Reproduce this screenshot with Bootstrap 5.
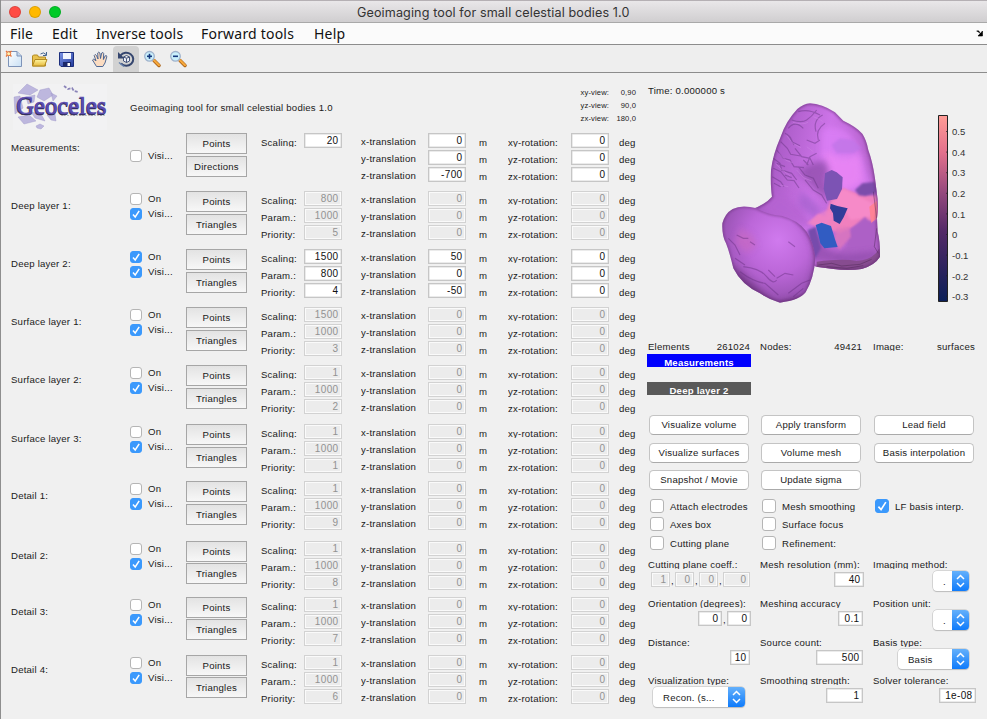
<!DOCTYPE html>
<html lang="en">
<head>
<meta charset="utf-8">
<meta name="viewport" content="width=device-width, initial-scale=1">
<title>Geoimaging tool for small celestial bodies 1.0</title>
<link href="https://cdn.jsdelivr.net/npm/bootstrap@5.3.0/dist/css/bootstrap.min.css" rel="stylesheet">
<style>
body{width:987px;height:719px;overflow:hidden;background:#f0f0f0;color:#1a1a1a;font:9.6px/14px "Liberation Sans",Arial,sans-serif;letter-spacing:.21px;border-left:1px solid #8e8e8e}
.titlebar{height:23px;flex:none;background:linear-gradient(#e9e7e9,#d0ced0);border-top:1px solid #b5b0b4;border-bottom:1px solid #a9a9a9;font:12.6px/23px Inter,Roboto,sans-serif;letter-spacing:.11px;color:#333}
.titlebar .lights{width:356px;padding-left:8px;gap:8px}
.light{width:12px;height:12px;border-radius:50%;border:1px solid #0002}
.light.close-dot{background:#ff4b44}.light.min-dot{background:#ffb900}.light.max-dot{background:#00ca28}
.menus{height:22px;flex:none;background:#fbfbfb;border-bottom:1px solid #8c8c8c;font:14px/21px "Noto Sans",sans-serif;letter-spacing:.2px;color:#111;padding:0 2px 0 9px}
.me1{width:42px}.me2{width:44px}.me3{width:105px}.me4{width:113px}
.tools{height:28px;flex:none;background:#eee;border-bottom:1px solid #8c8c8c}
.tools svg{display:block}
.left-pane{width:647px;flex:none}
.intro{height:60px}
.intro-text{padding-top:28px}
.views{font-size:7.6px;line-height:13px;padding-top:13px;letter-spacing:.12px}
.view-values{width:27px;margin-right:12px}
.groups{display:grid;grid-template-rows:58px 58px 58px 58px 59px 57px 60px 56px 58px 58px}
.grp{display:grid;grid-template-columns:119px 56px 61px 14px 43px 38px 19px 67px 38px 13px 29px 63px 38px 10px 28px;padding-left:10px;align-items:start}
.grp .name{padding-top:8px}
.ln{height:14px;margin-bottom:3px;overflow:hidden;white-space:nowrap}
.texts{padding-top:3px}
.texts .ln:first-child{height:11px;margin-bottom:6px}
.trans{padding-top:2px}
.units{padding-top:3px}
.num{display:block;height:15px;border:1px solid #c6c6c6;background:#fff;font-size:10px;letter-spacing:.35px;line-height:14px;text-align:right;padding-right:2.500px;color:#111;box-shadow:inset 0 0 0 .5px #d8d8d8}
.fields .num{margin-bottom:2px}
.num.off{background:#ececec;border-color:#d2d2d2;box-shadow:inset 0 0 0 1px #fafafa;color:#929292}
.flat{height:21px;border:1px solid #a6a6a6;background:linear-gradient(#e3e3e3,#f7f7f7);text-align:center;line-height:19px}
.flat+.flat{margin-top:2px}
.tight .flat+.flat{margin-top:1px}
.check{display:flex;align-items:center;gap:6px;height:15px}
.check span{padding-top:1px}
.box{width:12px;height:12px;flex:none;border:1px solid #b5b5b5;border-radius:3px;background:#fff;display:flex}
.box.on{background:#3b99fc;border-color:#3b99fc}
.box svg{width:100%;height:100%}
.right-pane{width:339px;flex:none;height:646px}
.time{height:24px;padding-top:11px}
.plot{display:block;width:339px;height:242px;letter-spacing:0}
.tri{display:grid;grid-template-columns:112px 113px 114px}
.stats{height:15px;align-items:start}
.stats>div{height:12px;width:102px;overflow:hidden;line-height:16px}
.strip{width:104px;height:13px;overflow:hidden;color:#fff;font-weight:700;text-align:center;line-height:18px;margin-left:-1px}
.strip.meas{background:#0000fe}
.strip.deep{background:#595959;margin-top:15px}
.pills{margin-top:20px;padding-left:1px;grid-template-rows:28px 27px 28px}
.pill{width:100px;height:20px;background:#fff;border:1px solid #c4c4c4;border-bottom-color:#aaa;border-radius:4.5px;text-align:center;line-height:18px}
.opts{padding-left:2px;grid-template-rows:18px 19px 19px}
.opts .check{height:16px}
.opts .box{width:14px;height:14px}
.params{grid-template-rows:39px 39px 38px 38px;margin-top:4px}
.params .cap{height:11px;overflow:hidden;line-height:14px;margin-bottom:3px}
.pick{height:20px;margin-top:-1px;background:#fff;border-radius:4px;box-shadow:0 0 0 .5px #bbb,0 1px 1px #0003;display:flex;line-height:22px}
.pick span{flex:1;padding-left:10px;overflow:hidden}
.pick svg{width:17px;height:20px;flex:none;border-radius:0 4px 4px 0;background:linear-gradient(#64b0fb,#0f7bfb)}
.end102{width:102px}.end103{width:103px}.end104{width:104px}.end96{width:96px}
.w19{width:19px}.w20{width:20px}.w24{width:24px}.w25{width:25px}.w27{width:27px}.w30{width:30px}.w36{width:36px}.w37{width:37px}.w47{width:47px}.w71{width:71px}.w92{width:92px}
.sep{width:5px;text-align:center;line-height:17px}
.in3{padding-left:3px}.in4{padding-left:5px}
</style>
</head>
<body class="d-flex flex-column">
<header class="titlebar d-flex">
  <div class="lights d-flex align-items-center">
    <i class="light close-dot"></i><i class="light min-dot"></i><i class="light max-dot"></i>
  </div>
  <div>Geoimaging tool for small celestial bodies 1.0</div>
</header>
<nav class="menus d-flex">
  <span class="me1">File</span><span class="me2">Edit</span><span class="me3">Inverse tools</span><span class="me4">Forward tools</span><span class="me5">Help</span>
  <svg class="ms-auto mt-1" width="10" height="14"><path d="M1.500 4q3-1 3 1.500l2 2M7.500 4v5H3z" fill="#000" stroke="#000" stroke-width=".6"/></svg>
</nav>
<div class="tools">
<svg width="200" height="27" viewBox="1 45 200 27">
  <defs>
    <linearGradient id="paper" x2="1" y2="1"><stop stop-color="#fff"/><stop offset="1" stop-color="#c9e0f5"/></linearGradient>
    <linearGradient id="gold" x2="0" y2="1"><stop stop-color="#fff6a0"/><stop offset="1" stop-color="#e6b93c"/></linearGradient>
    <linearGradient id="disk" x2="1" y2="1"><stop stop-color="#7d96e8"/><stop offset="1" stop-color="#223a9c"/></linearGradient>
  </defs>
  <path d="M8.500 51.500h8.500l4.500 4.500v10.500h-13z" fill="url(#paper)" stroke="#7d93b8"/><path d="M17 51.500v4.500h4.500" fill="#c4d6ec" stroke="#7d93b8"/>
  <path d="M6 51l5.500 5.500M11.500 51l-5.500 5.500" stroke="#e8743a" stroke-width="1.300"/><circle cx="8.700" cy="53.700" r="2" fill="#fff2b0" stroke="#e8743a"/>
  <path d="M32.500 66V56l1-1h4l1 2h7v9z" fill="#e9c24e" stroke="#b28a22"/><path d="M32.500 66l2.500-6.500h12L44.500 66z" fill="url(#gold)" stroke="#b28a22"/><path d="M40.500 54q3-2.500 5.500.5M46.500 52v3.500H43" fill="none" stroke="#43648f"/>
  <path d="M59.500 52.500h14v14H61l-1.500-1.500z" fill="url(#disk)" stroke="#1d2f7d"/><path d="M63 53h8v6h-8z" fill="#f1f5ff"/><path d="M63 62h8v4.500h-8z" fill="#1b2869"/><path d="M67.500 63h2.500v3h-2.500z" fill="#fff"/>
  <path d="M96.500 66.500l-4-6.500q1-2 3 .500l.500.500-1.800-5.500q.8-2 2.300 0l1.500 3.500-.3-6q1-1.800 2.200 0l.6 5.500 1.200-5.500q1.500-1.300 2 .500l-.3 6 1.800-3.700q1.700-.8 1.600 1l-1.800 6.200-2.200 3.500z" fill="#fbdcc1" stroke="#3c5a8c" stroke-width=".9"/>
  <path d="M113 50q0-4 4-4h18q4 0 4 4v22h-26z" fill="#d2d2d2"/>
  <path d="M120.500 55.500a7 6.500 0 1 1 .500 8" fill="none" stroke="#35466f" stroke-width="2"/><path d="M118 52v6.500h6.500z" fill="#35466f"/><path d="M119 62.500l5 4" stroke="#6682ad" stroke-width="1.500"/>
  <path d="M123.500 57l3-1.500 3 1.500v4l-3 1.500-3-1.500zM123.500 57l3 1.300 3-1.300M126.500 58.500v4" fill="#eef1f8" stroke="#35466f" stroke-width=".9"/>
  <g id="mag"><path d="M154 60.500l5 5" stroke="#a75d12" stroke-width="3.500" stroke-linecap="round"/><path d="M154 60.200l5 5" stroke="#f5a83c" stroke-width="2.200" stroke-linecap="round"/><circle cx="149.500" cy="56.300" r="4.800" fill="#c9effb" stroke="#9fb2cc" stroke-width="1.300"/><path d="M147 56.300h5" stroke="#14377d" stroke-width="1.600"/></g>
  <path d="M149.500 53.800v5" stroke="#14377d" stroke-width="1.600"/><use href="#mag" x="26"/>
</svg>
</div>
<main class="d-flex">
<section class="left-pane">
  <div class="intro d-flex">
    <svg width="129" height="60" viewBox="1 73 129 60" class="flex-shrink-0">
      <path d="M13 84h94v46H13z" fill="#f2f2f3"/>
      <g fill="#bdb7de" stroke="#9c95c8" stroke-width=".4">
        <path d="M18 93l9-9 11 6-8 5zM40 90l9-2 4 7-9 6-7-4zM14 97l6-1 3 12-8 6zM18 117l11-2 7 6-12 3zM31 112l10 2 4 7-10-3zM47 115l8-1 1 7-5-1zM51 93l6 3-4 5zM36 126l4-2 4 2-3 3-4-1zM26 97l9-2-1 7-6 2z"/>
      </g>
      <path d="M64 86l4 3 4-1 2 3 4 1" fill="none" stroke="#8a83b8" stroke-width="1.800" stroke-dasharray="3 1.500"/>
      <path d="M61 115.500h45" stroke="#c4c4c4" stroke-dasharray="2 1"/>
      <g font-family="Liberation Serif,serif" font-size="25" letter-spacing="0"><text x="16" y="114.500" textLength="90" lengthAdjust="spacingAndGlyphs" fill="#29264d" stroke="#29264d" stroke-width=".6">Geoceles</text><text x="16.600" y="113.900" textLength="90" lengthAdjust="spacingAndGlyphs" fill="#5b4cae" stroke="#5b4cae" stroke-width=".5">Geoceles</text></g>
    </svg>
    <div class="intro-text">Geoimaging tool for small celestial bodies 1.0</div>
    <div class="views ms-auto text-end">xy-view:<br>yz-view:<br>zx-view:</div>
    <div class="views view-values text-end">0,90<br>90,0<br>180,0</div>
  </div>
  <div class="groups" id="groups"></div>
</section>
<section class="right-pane">
  <div class="time">Time: 0.000000 s</div>
  <svg class="plot" viewBox="648 97 339 242" font-size="9.500">
    <defs>
      <linearGradient id="cbar" x2="0" y2="1"><stop stop-color="#ff9c96"/><stop offset=".2" stop-color="#e2708c"/><stop offset=".42" stop-color="#93487d"/><stop offset=".62" stop-color="#542a68"/><stop offset=".85" stop-color="#27225c"/><stop offset="1" stop-color="#0b1f58"/></linearGradient>
      <linearGradient id="big" x1="0" x2="1" y2=".3"><stop stop-color="#8a48a8"/><stop offset=".25" stop-color="#a95bc6"/><stop offset=".6" stop-color="#cd74e8"/><stop offset="1" stop-color="#b060c6"/></linearGradient>
      <radialGradient id="lobe" cx=".6" cy=".35" r=".75"><stop stop-color="#d07aee"/><stop offset=".45" stop-color="#bc67d9"/><stop offset=".8" stop-color="#9b54b6"/><stop offset="1" stop-color="#6f3680"/></radialGradient>
      <filter id="b3" x="-30%" y="-30%" width="160%" height="160%"><feGaussianBlur stdDeviation="3"/></filter>
      <filter id="b10" x="-40%" y="-40%" width="180%" height="180%"><feGaussianBlur stdDeviation="10"/></filter>
      <filter id="b1"><feGaussianBlur stdDeviation="1.800"/></filter>
      <path id="bigp" d="M300 25Q335 26 375 52L400 77Q440 96 457 116Q470 136 475 165Q488 200 495 250L500 290Q507 330 501 370L503 410Q511 440 510 485Q495 510 455 522Q415 528 370 522L318 515L290 500L120 345Q165 330 186 305Q181 275 183 225Q188 180 212 125Q228 78 262 42Q280 27 300 25Z"/>
      <path id="lobp" d="M37 385Q45 355 68 342Q95 328 140 340Q175 360 215 362Q265 375 290 410Q312 445 316 490Q312 550 287 592Q270 615 210 623Q175 612 150 595Q95 570 70 520Q58 470 48 445Q35 420 37 385Z"/>
      <clipPath id="cb"><use href="#bigp"/></clipPath><clipPath id="cl"><use href="#lobp"/></clipPath>
    </defs>
    <g transform="translate(710 95) scale(.33333)">
      <use href="#bigp" fill="url(#big)"/>
      <g clip-path="url(#cb)">
        <path d="M335 105Q420 70 460 190L490 280L400 310L335 210Z" fill="#dd80f8" opacity=".75" filter="url(#b10)"/>
        <path d="M340 170L400 190L450 180L460 260L400 290L350 225Z" fill="#ee88f5" opacity=".7" filter="url(#b10)"/>
        <path d="M365 150l25-20 40 5 25 25-25 15-50 0z" fill="#be74e6" opacity=".7" filter="url(#b3)"/>
        <path d="M205 290Q300 350 300 400L200 365L150 345Z" fill="#b563d2" opacity=".8" filter="url(#b10)"/>
        <path d="M268 290l35 20 30 35-20 25-45-35z" fill="#a360cc" opacity=".7" filter="url(#b10)"/>
        <path d="M380 290l20-10 50 18 50 5 5 70-25 5-55 20-35 15-60-15-30-15 25-25 20 5 15-45z" fill="#f080be" filter="url(#b3)"/>
        <path d="M290 385l30-25 30-15 20 15-20 30-30 5z" fill="#ee84c8" opacity=".7" filter="url(#b3)"/>
        <path d="M380 292l22-9 45 22 40 20-5 40-60 10-20-35-40-10z" fill="#f68ac8" filter="url(#b3)"/>
        <path d="M478 335l23-18 2 50-20 18z" fill="#ff8296" filter="url(#b1)"/>
        <path d="M425 400l40-35 35 35 10 80-50 35-90-25 40-35z" fill="#ad60c6" filter="url(#b3)"/>
        <path d="M378 400l40-5 5 30-35 40-15-30z" fill="#de78bd" opacity=".8" filter="url(#b3)"/>
        <path d="M290 425L330 420L350 460L400 480L500 470L510 485L440 505L310 500Z" fill="#8e4baa" opacity=".75" filter="url(#b10)"/>
        <path d="M293 405l25-10 15 65-20 35z" fill="#774bac" filter="url(#b3)"/>
        <path d="M305 205l38-10 15 32-12 25 15 65-45-30-50-60z" fill="#8446a0" opacity=".65" filter="url(#b10)"/>
        <path d="M345 235l20-10 15 7 18 15-2 35-15 30-30 5-10-35z" fill="#7c52b4" filter="url(#b1)"/>
        <path d="M435 285l22-20 38-5 7 32-35 11-20-2z" fill="#7b4dab" filter="url(#b3)"/>
        <path d="M362 326l20 7 31 7-12 27-12 20-18-10-2-22-9-15z" fill="#313c99"/>
        <path d="M317 390l18-7 28 10 12 40 8 23-40 4-12-15-7-30z" fill="#315cc2"/>
        <path d="M320 500Q400 490 440 498Q490 495 508 460L512 500L450 530L320 520Z" fill="#874c90"/>
        <path d="M325 510l40-5 30 8 55-5 35-15M350 515l60 5 50-8M500 400l-7 55 12 20M490 290l10 80" fill="none" stroke="#47244f" stroke-width="2" opacity=".65"/>
        <g fill="none" stroke="#60317b" stroke-width="3.500" opacity=".42" filter="url(#b1)"><path d="M245 75q30 10 45 0t30-30M235 100q20-25 45 0M265 50q30-10 65 10M318 110q-10-35 20-50M225 115q15 5 20 25l25 12M212 140l20 20 10 18 30 5M200 165l20 25 20 5 12 20 30 3M190 190l20 15 5 20 30 10 15 20M190 220l22 10 20 25 20 2 15 22M187 245l25 15 10 15M255 160l20 25 25 5 10 20M265 215l20 25 25 10 15 30M320 175l-20 10-10 25M345 85q-30 20-20 50M285 255l25 30 25 15 15 25M290 135l25 10 15-10M240 125l12 25M192 265l20 10M200 205l25 10M225 240l20 8M280 195l15 15"/></g>
        <g fill="none" stroke="#d088e6" stroke-width="3" opacity=".45" filter="url(#b1)"><path d="M249 82q30 9 45 0M230 122l18 23 25 13M206 175l22 21 20 7M197 207l20 18 24 18M260 225l20 23 25 10M310 65q15 5 30 15M290 155l20 15M210 270l25 5"/></g>
        <use href="#bigp" fill="none" stroke="#5e2c6d" stroke-width="9" opacity=".5" filter="url(#b3)"/>
      </g>
      <use href="#lobp" fill="url(#lobe)"/>
      <g clip-path="url(#cl)">
        <path d="M90 400l35 20 15 30-30 25-35-30z" fill="#c569c4" opacity=".8" filter="url(#b10)"/>
        <path d="M255 370Q310 420 315 500L290 600L330 550L330 400Z" fill="#713985" opacity=".6" filter="url(#b10)"/>
        <path d="M60 500L170 600L200 622L290 600L260 640L100 620Z" fill="#642e73" opacity=".6" filter="url(#b10)"/>
        <g fill="none" stroke="#673080" stroke-width="3.500" opacity=".45" filter="url(#b1)"><path d="M80 420l20 10 15 0M100 515q50 5 70 30t30 10M90 530q40 30 75 35l40 35M55 430l20 20 15 30M200 550l25-15 25 5M175 525l20 20M235 440l20 15M235 595l40-30 25-10M250 605l30-25M120 440l15 10M75 490l30 20"/></g>
        <use href="#lobp" fill="none" stroke="#5e2c6d" stroke-width="8" opacity=".4" filter="url(#b3)"/>
      </g>
    </g>
    <path d="M938.500 115.500h9v186h-9z" fill="url(#cbar)" stroke="#222"/>
    <path d="M946 131.500h2m-2 20.600h2m-2 20.600h2m-2 20.600h2m-2 20.600h2m-2 20.600h2m-2 20.600h2m-2 20.600h2m-2 20.600h2" stroke="#222" stroke-width=".7"/>
    <g fill="#333"><text x="952" y="135">0.5</text><text x="952" y="156">0.4</text><text x="952" y="176">0.3</text><text x="952" y="197">0.2</text><text x="952" y="218">0.1</text><text x="952" y="238">0</text><text x="952" y="259">-0.1</text><text x="952" y="280">-0.2</text><text x="952" y="300">-0.3</text></g>
  </svg>
  <div class="tri stats">
    <div class="d-flex justify-content-between"><span>Elements</span><span>261024</span></div>
    <div class="d-flex justify-content-between"><span>Nodes:</span><span>49421</span></div>
    <div class="d-flex justify-content-between"><span>Image:</span><span>surfaces</span></div>
  </div>
  <div class="strip meas">Measurements</div>
  <div class="strip deep">Deep layer 2</div>
  <div class="tri pills">
    <div class="pill">Visualize volume</div><div class="pill">Apply transform</div><div class="pill">Lead field</div>
    <div class="pill">Visualize surfaces</div><div class="pill">Volume mesh</div><div class="pill">Basis interpolation</div>
    <div class="pill">Snapshot / Movie</div><div class="pill">Update sigma</div>
  </div>
  <div class="tri opts">
    <div class="check"><i class="box"></i><span>Attach electrodes</span></div><div class="check"><i class="box"></i><span>Mesh smoothing</span></div>
    <div class="check"><i class="box on"><svg viewBox="0 0 10 10"><path d="M2 5.500L4.200 8 8.200 1.800" fill="none" stroke="#fff" stroke-width="1.400"/></svg></i><span>LF basis interp.</span></div>
    <div class="check"><i class="box"></i><span>Axes box</span></div><div class="check"><i class="box"></i><span>Surface focus</span></div><div></div>
    <div class="check"><i class="box"></i><span>Cutting plane</span></div><div class="check"><i class="box"></i><span>Refinement:</span></div>
  </div>
  <div class="tri params">
    <div><div class="cap">Cutting plane coeff.:</div>
      <div class="d-flex in3"><span class="num off w19">1</span><span class="sep">,</span><span class="num off w19">0</span><span class="sep">,</span><span class="num off w19">0</span><span class="sep">,</span><span class="num off w27">0</span></div></div>
    <div><div class="cap">Mesh resolution (mm):</div><div class="d-flex justify-content-end end104"><span class="num w30">40</span></div></div>
    <div><div class="cap">Imaging method:</div><div class="d-flex justify-content-end end96"><div class="pick w36"><span>.</span><svg viewBox="0 0 17 20"><path d="M5 8l3.500-3.500L12 8M5 12l3.500 3.500L12 12" fill="none" stroke="#fff" stroke-width="1.500"/></svg></div></div></div>
    <div><div class="cap">Orientation (degrees):</div><div class="d-flex justify-content-end end103"><span class="num w24">0</span><span class="sep">,</span><span class="num w24">0</span></div></div>
    <div><div class="cap">Meshing accuracy</div><div class="d-flex justify-content-end end103"><span class="num w25">0.1</span></div></div>
    <div><div class="cap">Position unit:</div><div class="d-flex justify-content-end end96"><div class="pick w36"><span>.</span><svg viewBox="0 0 17 20"><path d="M5 8l3.500-3.500L12 8M5 12l3.500 3.500L12 12" fill="none" stroke="#fff" stroke-width="1.500"/></svg></div></div></div>
    <div><div class="cap">Distance:</div><div class="d-flex justify-content-end end102"><span class="num w20">10</span></div></div>
    <div><div class="cap">Source count:</div><div class="d-flex justify-content-end end103"><span class="num w47">500</span></div></div>
    <div><div class="cap">Basis type:</div><div class="d-flex justify-content-end end96"><div class="pick w71"><span>Basis</span><svg viewBox="0 0 17 20"><path d="M5 8l3.500-3.500L12 8M5 12l3.500 3.500L12 12" fill="none" stroke="#fff" stroke-width="1.500"/></svg></div></div></div>
    <div><div class="cap">Visualization type:</div><div class="d-flex in4"><div class="pick w92"><span>Recon. (s...</span><svg viewBox="0 0 17 20"><path d="M5 8l3.500-3.500L12 8M5 12l3.500 3.500L12 12" fill="none" stroke="#fff" stroke-width="1.500"/></svg></div></div></div>
    <div><div class="cap">Smoothing strength:</div><div class="d-flex justify-content-end end103"><span class="num w37">1</span></div></div>
    <div><div class="cap">Solver tolerance:</div><div class="d-flex justify-content-end end103"><span class="num w37">1e-08</span></div></div>
  </div>
</section>
</main>
<script src="https://cdn.jsdelivr.net/npm/bootstrap@5.3.0/dist/js/bootstrap.bundle.min.js"></script>
<script>
// name, enabled, visible, [scaling, param, priority], [x, y, z translation]
const data = [
  ['Measurements:', null, false, [20], [0, 0, -700]],
  ['Deep layer 1:', false, true, [800, 1000, 5], [0, 0, 0]],
  ['Deep layer 2:', true, true, [1500, 800, 4], [50, 0, -50]],
  ['Surface layer 1:', false, true, [1500, 1000, 3], [0, 0, 0]],
  ['Surface layer 2:', false, true, [1, 1000, 2], [0, 0, 0]],
  ['Surface layer 3:', false, true, [1, 1000, 1], [0, 0, 0]],
  ['Detail 1:', false, true, [1, 1000, 9], [0, 0, 0]],
  ['Detail 2:', false, true, [1, 1000, 8], [0, 0, 0]],
  ['Detail 3:', false, true, [1, 1000, 7], [0, 0, 0]],
  ['Detail 4:', false, true, [1, 1000, 6], [0, 0, 0]]
];
const tick = '<svg viewBox="0 0 10 10"><path d="M2 5.500L4.200 8 8.200 1.800" fill="none" stroke="#fff" stroke-width="1.500"/></svg>';
const check = (on, t) => `<div class="check"><i class="box ${on ? 'on' : ''}">${on ? tick : ''}</i><span>${t}</span></div>`;
const lines = (cls, a) => `<div class="${cls}">${a.map(t => `<div class="ln">${t}</div>`).join('')}</div>`;
const nums = (a, off) => `<div class="fields">${a.map(v => `<span class="num ${off ? 'off' : ''}">${v}</span>`).join('')}</div>`;
document.getElementById('groups').innerHTML = data.map(([name, on, vis, s, tr], i) => {
  const off = on === false;
  return `<div class="grp ${i > 6 ? 'tight' : ''}"><div class="name">${name}</div>
  <div>${on === null ? '<div class="check"></div>' : check(on, 'On')}${check(vis, 'Visi...')}</div>
  <div><div class="flat">Points</div><div class="flat">${i ? 'Triangles' : 'Directions'}</div></div><div></div>
  ${lines('texts', ['Scaling:', 'Param.:', 'Priority:'].slice(0, s.length))}${nums(s, off)}<div></div>
  ${lines('trans', ['x-translation', 'y-translation', 'z-translation'])}${nums(tr, off)}<div></div>
  ${lines('units', ['m', 'm', 'm'])}${lines('texts', ['xy-rotation:', 'yz-rotation:', 'zx-rotation:'])}${nums([0, 0, 0], off)}<div></div>
  ${lines('units', ['deg', 'deg', 'deg'])}</div>`;
}).join('');
</script>
</body>
</html>
